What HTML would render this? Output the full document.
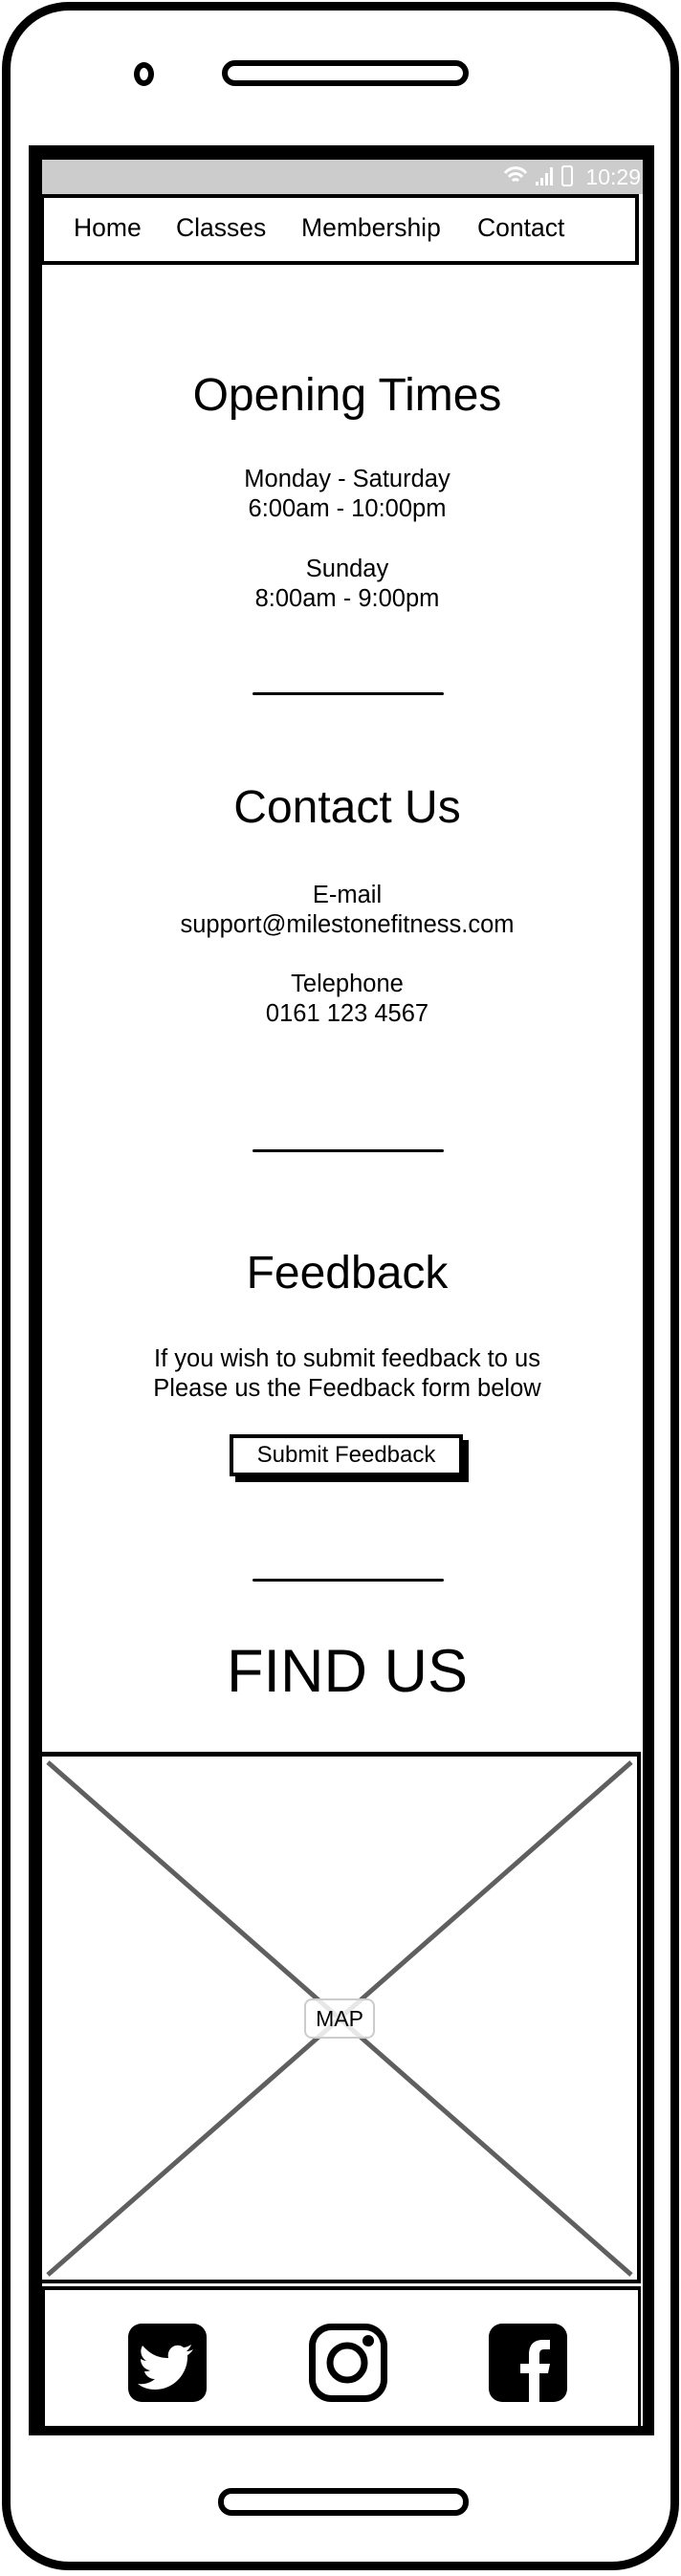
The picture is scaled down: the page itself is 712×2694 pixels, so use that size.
<!DOCTYPE html>
<html><head><meta charset="utf-8"><style>
*{margin:0;padding:0;box-sizing:border-box}
body{width:712px;height:2694px;background:#fff;position:relative;overflow:hidden;font-family:"Liberation Sans",sans-serif;color:#000}
.a{position:absolute}
.c{position:absolute;left:49px;width:628px;text-align:center}
.h{font-size:48px}
.t{font-size:25.5px;line-height:31px}
.div{position:absolute;left:264px;width:200px;height:3px;background:#000;border-radius:2px}
</style></head><body>
<div class="a" style="left:2px;top:2px;width:708px;height:2686px;border:9px solid #000;border-radius:70px"></div>
<div class="a" style="left:140px;top:65px;width:21px;height:25px;border:6px solid #000;border-radius:50%"></div>
<div class="a" style="left:232px;top:63px;width:258px;height:27px;border:6px solid #000;border-radius:14px"></div>
<div class="a" style="left:228px;top:2602px;width:262px;height:29px;border:6px solid #000;border-radius:14px"></div>
<div class="a" style="left:30px;top:152px;width:654px;height:2395px;border:14px solid #000;border-width:15px 12px 10px 14px"></div>
<div class="a" style="left:44px;top:167px;width:628px;height:36px;background:#ccc"></div>
<div class="a" style="left:490px;top:172px;width:180px;height:28px;color:#fff;font-size:23px;text-align:right">
<svg width="80" height="24" viewBox="0 0 80 24" style="vertical-align:-3px"><path d="M2 9a14 14 0 0 1 22 0M6 13a9 9 0 0 1 14 0M10 17a4 4 0 0 1 6 0" stroke="#fff" stroke-width="3" fill="none"/><rect x="34" y="18" width="3" height="4" fill="#fff"/><rect x="39" y="14" width="3" height="8" fill="#fff"/><rect x="44" y="9" width="3" height="13" fill="#fff"/><rect x="49" y="3" width="3" height="19" fill="#fff"/><rect x="62" y="2" width="10" height="20" rx="2" stroke="#fff" stroke-width="2" fill="none"/></svg> 10:29</div>
<div class="a" style="left:42px;top:203px;width:626px;height:74px;border:4px solid #000"></div>
<div class="a" style="left:77px;top:223px;font-size:26.5px">Home</div>
<div class="a" style="left:184px;top:223px;font-size:26.5px">Classes</div>
<div class="a" style="left:315px;top:223px;font-size:26.5px">Membership</div>
<div class="a" style="left:499px;top:223px;font-size:26.5px">Contact</div>

<div class="c h" style="top:386px">Opening Times</div>
<div class="c t" style="top:486px">Monday - Saturday<br>6:00am - 10:00pm</div>
<div class="c t" style="top:580px">Sunday<br>8:00am - 9:00pm</div>
<div class="div" style="top:724px"></div>

<div class="c h" style="top:817px">Contact Us</div>
<div class="c t" style="top:921px">E-mail<br>support@milestonefitness.com</div>
<div class="c t" style="top:1014px">Telephone<br>0161 123 4567</div>
<div class="div" style="top:1202px"></div>

<div class="c h" style="top:1304px">Feedback</div>
<div class="c t" style="top:1406px">If you wish to submit feedback to us<br>Please us the Feedback form below</div>
<div class="a" style="left:246px;top:1506px;width:244px;height:44px;background:#000"></div>
<div class="a" style="left:240px;top:1500px;width:244px;height:44px;border:4px solid #000;background:#fff;font-size:24px;text-align:center;line-height:36px">Submit Feedback</div>
<div class="div" style="top:1651px"></div>

<div class="c" style="top:1712px;font-size:63px">FIND US</div>

<div class="a" style="left:40px;top:1832px;width:630px;height:556px;border:4px solid #000;border-width:5px 4px 4px 4px"></div>
<svg class="a" style="left:44px;top:1837px" width="622" height="548"><path d="M6 6L616 542M616 6L6 542" stroke="#5f5f5f" stroke-width="5"/></svg>
<div class="a" style="left:318px;top:2090px;width:74px;height:42px;border:2px solid #ccc;border-radius:8px;background:rgba(255,255,255,.85);font-size:23px;text-align:center;line-height:38px">MAP</div>

<div class="a" style="left:44px;top:2391px;width:626px;height:150px;border:4px solid #000;border-width:4px 3px 0 3px"></div>
<svg class="a" style="left:134px;top:2430px" width="82" height="82" viewBox="0 0 82 82"><rect width="82" height="82" rx="14"/><path d="M15 23c8 9 16 13 27 13-2-10 8-17 16-11 3 0 6-2 8-3-1 3-3 5-5 7 3 0 5-1 7-2-2 3-4 5-6 6 1 18-13 36-34 36-7 0-13-2-18-6 7 1 13-1 18-5-6 0-10-4-11-8 2 0 4 0 6-1-6-1-10-6-10-12 2 1 4 2 6 2-6-4-7-11-4-16z" fill="#fff"/></svg>
<svg class="a" style="left:323px;top:2430px" width="82" height="82" viewBox="0 0 82 82"><rect x="3.5" y="3.5" width="75" height="75" rx="20" fill="none" stroke="#000" stroke-width="7"/><circle cx="40" cy="41" r="18" fill="none" stroke="#000" stroke-width="7"/><circle cx="62" cy="18" r="6"/></svg>
<svg class="a" style="left:511px;top:2430px" width="82" height="82" viewBox="0 0 82 82"><rect width="82" height="82" rx="14"/><path d="M42 82V52H33V42H42V33C42 22 47 17 57 17H64V27H58C54 27 53 29 53 33V42H64L62 52H53V82z" fill="#fff"/></svg>
</body></html>
